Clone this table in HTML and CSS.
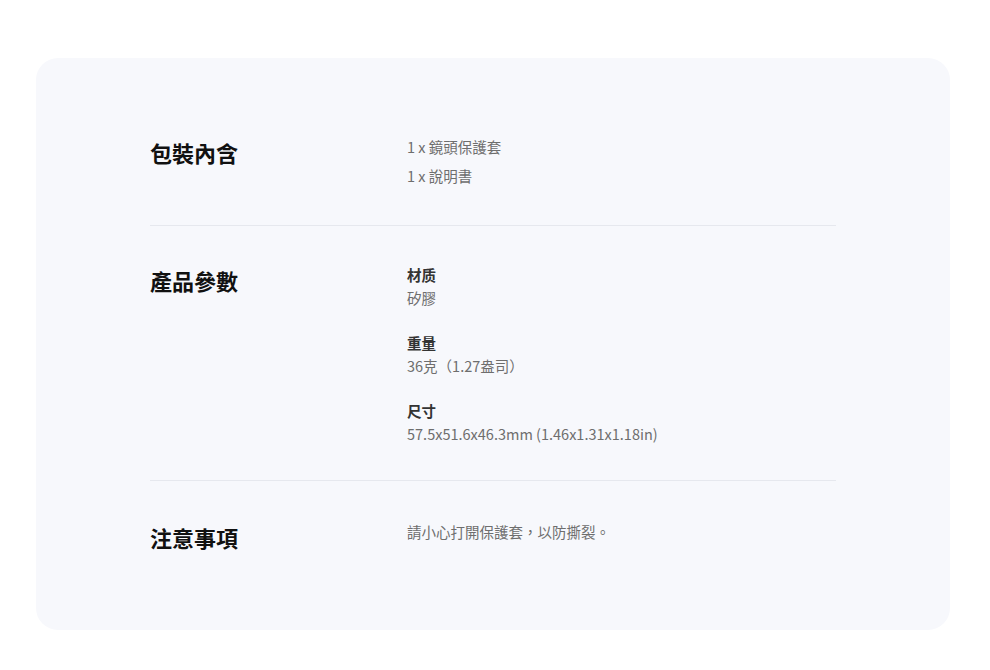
FILE: index.html
```html
<!DOCTYPE html>
<html lang="zh-Hant">
<head>
<meta charset="utf-8">
<link rel="stylesheet" href="styles.css">
</head>
<body>
<div class="card">
  <section class="row row-first">
    <h2 class="title title-loose">包裝內含</h2>
    <div class="content loose">
      <p>1 x 鏡頭保護套</p>
      <p>1 x 說明書</p>
    </div>
  </section>
  <section class="row row-mid">
    <h2 class="title">產品參數</h2>
    <div class="content">
      <div class="spec">
        <p class="label">材质</p>
        <p>矽膠</p>
      </div>
      <div class="spec">
        <p class="label">重量</p>
        <p>36克（1.27盎司）</p>
      </div>
      <div class="spec">
        <p class="label">尺寸</p>
        <p>57.5x51.6x46.3mm (1.46x1.31x1.18in)</p>
      </div>
    </div>
  </section>
  <section class="row row-last">
    <h2 class="title">注意事項</h2>
    <div class="content">
      <p>請小心打開保護套，以防撕裂。</p>
    </div>
  </section>
</div>
</body>
</html>
```
FILE: styles.css
```css
* { box-sizing: border-box; }
html, body { margin: 0; padding: 0; background: #ffffff; }
body {
  font-family: "Noto Sans CJK TC", "Noto Sans", sans-serif;
  color: #666;
}
.card {
  margin: 58px 0 0 36px;
  width: 914px;
  height: 572px;
  background: #f7f8fc;
  border-radius: 22px;
  padding: 0 114px;
}
.row {
  display: flex;
  border-bottom: 1px solid #e6e8ee;
}
.row-first { padding: 74px 0 35px; }
.row-mid { padding: 37px 0 35px; }
.row-last { padding: 39px 0 0; border-bottom: none; }
.title {
  margin: 2px 0 0;
  width: 257px;
  flex: none;
  font-size: 22px;
  line-height: 30px;
  font-weight: 700;
  color: #111;
}
.title-loose { margin-top: 5px; }
.content p {
  margin: 0;
  font-size: 14.5px;
  line-height: 23px;
  color: #6e6e6e;
}
.content.loose p { line-height: 29px; }
.spec + .spec { margin-top: 22px; }
.content .label {
  font-weight: 700;
  color: #333;
}
```
